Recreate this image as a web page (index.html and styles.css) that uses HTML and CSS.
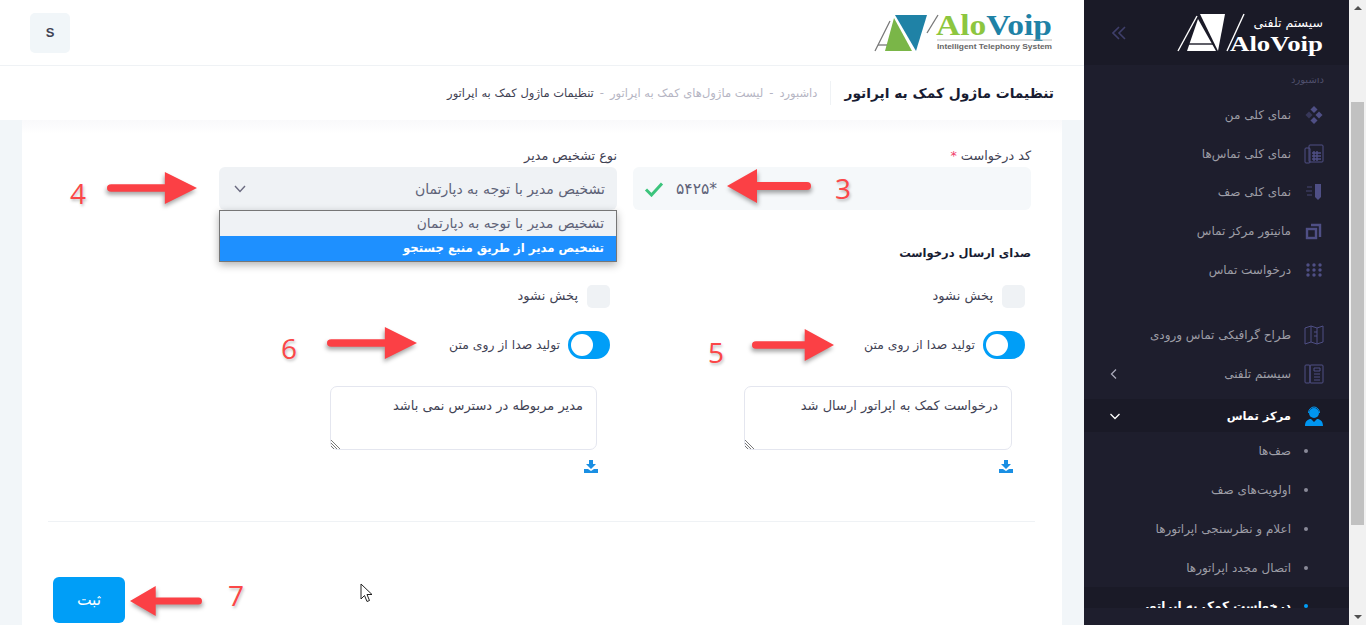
FILE: index.html
```html
<!DOCTYPE html>
<html lang="fa">
  <head>
    <meta charset="UTF-8" />
    <title>AloVoip</title>
    <link rel="stylesheet" href="styles.css">
  </head>
  <body>
    <main class="main" dir="rtl">
      <header class="topbar">
        <svg class="logo-light" width="180" height="40" viewBox="0 0 180 40">
          <polygon points="21,2 53,2 42,38" fill="#1f82a6"/>
          <polygon points="20,5 38,38 11,38" fill="#7ab648"/>
          <line x1="1" y1="38" x2="16" y2="8" stroke="#777" stroke-width="1.3"/>
          <line x1="4" y1="32" x2="13" y2="32" stroke="#777" stroke-width="1.3"/>
          <line x1="53" y1="20" x2="64" y2="2" stroke="#777" stroke-width="1.3"/>
          <text x="62" y="22" class="logo-word" textLength="116" lengthAdjust="spacingAndGlyphs"><tspan fill="#8dc63f">Alo</tspan><tspan fill="#1f82a6">Voip</tspan></text>
          <line x1="63" y1="27" x2="178" y2="27" stroke="#aaa" stroke-width="0.8"/>
          <text x="63" y="36" class="logo-tag" textLength="115" lengthAdjust="spacingAndGlyphs">Intelligent Telephony System</text>
        </svg>
        <div class="avatar">S</div>
      </header>

      <div class="subheader">
        <h1>تنظیمات ماژول کمک به اپراتور</h1>
        <ul class="crumbs">
          <li>داشبورد</li>
          <li>-</li>
          <li>لیست ماژول‌های کمک به اپراتور</li>
          <li>-</li>
          <li class="current">تنظیمات ماژول کمک به اپراتور</li>
        </ul>
      </div>

      <div class="content">
        <form class="card">
          <div class="row">
            <div class="field">
              <label>کد درخواست <span class="req">*</span></label>
              <div class="input valid">
                <span class="code">*۵۴۲۵</span>
                <svg width="20" height="16" viewBox="0 0 20 16"><path d="M2 8.5 L7.5 14 L18 2.5" fill="none" stroke="#3cc47c" stroke-width="3"/></svg>
              </div>
            </div>
            <div class="field">
              <label>نوع تشخیص مدیر</label>
              <div class="input select">
                <span>تشخیص مدیر با توجه به دپارتمان</span>
                <svg width="14" height="10" viewBox="0 0 14 10"><path d="M2 2 L7 7.5 L12 2" fill="none" stroke="#6b6b80" stroke-width="1.4"/></svg>
              </div>
              <ul class="options">
                <li>تشخیص مدیر با توجه به دپارتمان</li>
                <li class="on">تشخیص مدیر از طریق منبع جستجو</li>
              </ul>
            </div>
          </div>

          <h2 class="section-title">صدای ارسال درخواست</h2>

          <div class="row">
            <div class="sound">
              <label class="check"><span class="box"></span>پخش نشود</label>
              <label class="switch-row"><span class="switch"><i></i></span>تولید صدا از روی متن</label>
              <div class="tts">درخواست کمک به اپراتور ارسال شد
                <svg class="grip" width="10" height="10" viewBox="0 0 10 10"><path d="M0 1 L9 10 M0 4 L6 10 M0 7 L3 10" stroke="#555" stroke-width="0.8"/></svg>
              </div>
              <svg class="dl" width="14" height="13" viewBox="0 0 14 13"><path d="M5 0 H9 V4 H12 L7 9 L2 4 H5 Z M0 9 H4 L7 11 L10 9 H14 V13 H0 Z" fill="#1a8fe3"/></svg>
            </div>
            <div class="sound">
              <label class="check"><span class="box"></span>پخش نشود</label>
              <label class="switch-row"><span class="switch"><i></i></span>تولید صدا از روی متن</label>
              <div class="tts">مدیر مربوطه در دسترس نمی باشد
                <svg class="grip" width="10" height="10" viewBox="0 0 10 10"><path d="M0 1 L9 10 M0 4 L6 10 M0 7 L3 10" stroke="#555" stroke-width="0.8"/></svg>
              </div>
              <svg class="dl" width="14" height="13" viewBox="0 0 14 13"><path d="M5 0 H9 V4 H12 L7 9 L2 4 H5 Z M0 9 H4 L7 11 L10 9 H14 V13 H0 Z" fill="#1a8fe3"/></svg>
            </div>
          </div>

          <hr class="divider" />
          <div class="actions"><button type="button" class="save">ثبت</button></div>
        </form>
      </div>
    </main>

    <aside class="sidebar" dir="rtl">
      <div class="brand">
        <svg class="logo-dark" width="148" height="40" viewBox="0 0 148 40">
          <polygon points="24,1 49,1 42,38" fill="#fff"/>
          <polygon points="22,6 40,38 11,38" fill="#fff"/>
          <line x1="9" y1="31" x2="37" y2="31" stroke="#1a1a27" stroke-width="1.4"/>
          <line x1="2" y1="38" x2="21" y2="3" stroke="#fff" stroke-width="1.4"/>
          <line x1="51" y1="38" x2="68" y2="1" stroke="#fff" stroke-width="1.4"/>
          <text x="147" y="14" class="logo-fa" text-anchor="end">سیستم تلفنی</text>
          <text x="54" y="38" class="logo-word-dark" textLength="93" lengthAdjust="spacingAndGlyphs">AloVoip</text>
        </svg>
        <svg class="collapse" width="14" height="14" viewBox="0 0 14 14"><path d="M7 1 L1 7 L7 13 M13 1 L7 7 L13 13" fill="none" stroke="#3f3f6b" stroke-width="1.6"/></svg>
      </div>
      <nav class="menu">
        <div class="menu-cut">داشبورد</div>
        <a class="item"><svg width="20" height="20" viewBox="0 0 20 20" fill="#4f4f85"><rect x="7.5" y="2" width="5" height="5" transform="rotate(45 10 4.5)"/><rect x="2.5" y="7.5" width="5" height="5" opacity=".5" transform="rotate(45 5 10)"/><rect x="12.5" y="7.5" width="5" height="5" transform="rotate(45 15 10)"/><rect x="7.5" y="13" width="5" height="5" transform="rotate(45 10 15.5)"/></svg>نمای کلی من</a>
        <a class="item"><svg width="20" height="20" viewBox="0 0 20 20" fill="none" stroke="#4f4f85"><rect x="1" y="4" width="5" height="15" rx="1"/><rect x="5" y="1" width="14" height="17" rx="1"/><path d="M8 9h9M8 12h9M8 15h9M10 7v10M13 7v10" stroke-width="1.4"/></svg>نمای کلی تماس‌ها</a>
        <a class="item"><svg width="20" height="20" viewBox="0 0 20 20" fill="#4f4f85"><path d="M11 2h6v13l-3 3-3-3z"/><path d="M3 4h5v2H3zM2 8h6v2H2zM3 12h5v2H3z" opacity=".4"/></svg>نمای کلی صف</a>
        <a class="item"><svg width="20" height="20" viewBox="0 0 20 20" fill="none" stroke="#4f4f85" stroke-width="2.4"><path d="M7 4h9v12"/><rect x="3" y="8" width="9" height="9"/></svg>مانیتور مرکز تماس</a>
        <a class="item"><svg width="20" height="20" viewBox="0 0 20 20" fill="#4f4f85"><circle cx="4" cy="5" r="1.7"/><circle cx="10" cy="5" r="1.7"/><circle cx="16" cy="5" r="1.7"/><circle cx="4" cy="10" r="1.7"/><circle cx="10" cy="10" r="1.7"/><circle cx="16" cy="10" r="1.7"/><circle cx="4" cy="15" r="1.7"/><circle cx="10" cy="15" r="1.7"/><circle cx="16" cy="15" r="1.7"/></svg>درخواست تماس</a>
        <a class="item gap"><svg width="20" height="20" viewBox="0 0 20 20" fill="none" stroke="#4f4f85"><path d="M1 3l6-2 6 2 6-2v16l-6 2-6-2-6 2zM7 1v16M13 3v16"/><path d="M10 7h3M10 11h3"/></svg>طراح گرافیکی تماس ورودی</a>
        <a class="item"><svg width="20" height="20" viewBox="0 0 20 20" fill="none" stroke="#4f4f85"><rect x="1" y="1" width="5" height="18" rx="1"/><rect x="6" y="1" width="13" height="18" rx="1"/><path d="M10 4h6v3h-6zM10 10h6M10 13h6M10 16h6" /></svg>سیستم تلفنی<svg class="caret" width="10" height="12" viewBox="0 0 10 12"><path d="M7 1.5 L2.5 6 L7 10.5" fill="none" stroke="#a8a8b8" stroke-width="1.3"/></svg></a>
        <a class="item active"><svg width="20" height="20" viewBox="0 0 20 20" fill="#0095f0"><circle cx="10" cy="7" r="5"/><path d="M4.5 7a5.5 6 0 0 1 11 0" fill="none" stroke="#0095f0"/><path d="M1 20c0-5 3-7 6-7l3 3 3-3c3 0 6 2 6 7z"/></svg>مرکز تماس<svg class="caret" width="12" height="10" viewBox="0 0 12 10"><path d="M1.5 3 L6 7.5 L10.5 3" fill="none" stroke="#fff" stroke-width="1.3"/></svg></a>
        <a class="sub"><i></i>صف‌ها</a>
        <a class="sub"><i></i>اولویت‌های صف</a>
        <a class="sub"><i></i>اعلام و نظرسنجی اپراتورها</a>
        <a class="sub"><i></i>اتصال مجدد اپراتورها</a>
        <a class="sub current"><i></i>درخواست کمک به اپراتور</a>
      </nav>
    </aside>

    <div class="scrollbar">
      <span class="up"></span>
      <span class="thumb"></span>
      <span class="down"></span>
    </div>

    <!-- numbered notes drawn over the shot -->
    <div class="notes">
      <span class="num n3">3</span>
      <span class="num n4">4</span>
      <span class="num n5">5</span>
      <span class="num n6">6</span>
      <span class="num n7">7</span>
      <svg class="arrow a3" width="84" height="34" viewBox="0 0 84 34" preserveAspectRatio="none"><path d="M0 17 L30 0 V13 H80 a4 4 0 0 1 0 8 H30 V34 Z"/></svg>
      <svg class="arrow a4 flip" width="90" height="32" viewBox="0 0 84 34" preserveAspectRatio="none"><path d="M0 17 L30 0 V13 H80 a4 4 0 0 1 0 8 H30 V34 Z"/></svg>
      <svg class="arrow a5 flip" width="82" height="32" viewBox="0 0 84 34" preserveAspectRatio="none"><path d="M0 17 L30 0 V13 H80 a4 4 0 0 1 0 8 H30 V34 Z"/></svg>
      <svg class="arrow a6 flip" width="90" height="32" viewBox="0 0 84 34" preserveAspectRatio="none"><path d="M0 17 L30 0 V13 H80 a4 4 0 0 1 0 8 H30 V34 Z"/></svg>
      <svg class="arrow a7" width="72" height="30" viewBox="0 0 84 34" preserveAspectRatio="none"><path d="M0 17 L30 0 V13 H80 a4 4 0 0 1 0 8 H30 V34 Z"/></svg>
      <svg class="pointer" width="14" height="20" viewBox="0 0 14 20"><path d="M1 1 V16 L4.5 12.5 L7 18.5 L9.5 17.5 L7 11.5 H12 Z" fill="#fff" stroke="#222"/></svg>
    </div>
  </body>
</html>
```

FILE: styles.css
```css
* {
  box-sizing: border-box;
}

html,
body {
  height: 625px;
  overflow: hidden;
}

body {
  margin: 0;
  display: flex;
  font-family: "DejaVu Sans", sans-serif;
  font-size: 12px;
  color: #3f4254;
  background: #f2f6f9;
}

.main {
  width: 1084px;
  height: 625px;
  overflow: hidden;
}

.topbar {
  height: 66px;
  background: #fff;
  border-bottom: 1px solid #eff2f5;
  display: flex;
  align-items: center;
  justify-content: space-between;
  padding: 0 30px;
}

.logo-light,
.logo-dark {
  direction: ltr;
  overflow: visible;
}

.logo-word {
  font-family: "Liberation Serif", serif;
  font-weight: bold;
  font-size: 30px;
}

.logo-tag {
  font-family: "Liberation Sans", sans-serif;
  font-weight: bold;
  font-size: 8px;
  fill: #666;
}

.avatar {
  width: 40px;
  height: 40px;
  border-radius: 5px;
  background: #f1f6f9;
  color: #3f4254;
  font: bold 13px "Liberation Sans", sans-serif;
  display: flex;
  align-items: center;
  justify-content: center;
}

.subheader {
  height: 54px;
  background: #fff;
  display: flex;
  align-items: center;
  padding: 0 30px;
}

h1 {
  margin: 0;
  padding-left: 13px;
  border-left: 1px solid #eff2f5;
  font-size: 13.8px;
  font-weight: bold;
  line-height: 24px;
  color: #181c32;
}

.crumbs {
  list-style: none;
  margin: 0;
  padding: 0 13px 0 0;
  display: flex;
  gap: 6px;
  font-size: 11.5px;
  color: #b5b5c3;
}

.crumbs .current {
  color: #3f4254;
}

.content {
  padding: 0 22px;
}

.card {
  height: 520px;
  padding: 26px 31px 0 25px;
  background: linear-gradient(#f9f9fb, #fff 14px);
}

.row {
  display: flex;
  gap: 16px;
}

.field {
  position: relative;
  width: 398px;
}

label {
  display: block;
  font-size: 12.8px;
  line-height: 20px;
  color: #3f4254;
}

.req {
  color: #f1416c;
}

.input {
  height: 43px;
  margin-top: 1px;
  border-radius: 6px;
  background: #f5f8fa;
  display: flex;
  align-items: center;
  justify-content: space-between;
  padding: 0 12px 0 14px;
  color: #5e6278;
  font-size: 14px;
}

.select {
  background: #eff2f5;
}

.valid {
  justify-content: flex-end;
  gap: 12px;
  padding-left: 11px;
}

.code {
  font-size: 15.5px;
}

.options {
  position: absolute;
  top: 64px;
  left: 0;
  right: 0;
  margin: 0;
  padding: 0;
  list-style: none;
  border: 1px solid #767676;
  background: #eff2f5;
  box-shadow: 0 3px 8px rgba(0, 0, 0, 0.3);
  font-size: 13.8px;
  color: #5e6278;
}

.options li {
  height: 25px;
  line-height: 24px;
  padding: 0 12px;
}

.options .on {
  background: #1e90ff;
  color: #fff;
  font-size: 11.7px;
  font-weight: bold;
}

.section-title {
  margin: 33px 0 0;
  font-size: 11.5px;
  font-weight: bold;
  line-height: 20px;
  color: #181c32;
}

.sound {
  width: 398px;
  padding-top: 21px;
}

.sound + .sound {
  padding-right: 1px;
}

.sound + .sound .tts {
  width: 267px;
}

.check {
  display: flex;
  align-items: center;
  gap: 9px;
  height: 24px;
  padding-right: 6px;
  font-size: 13px;
}

.box {
  width: 23px;
  height: 23px;
  border-radius: 5px;
  background: #eff2f5;
}

.switch-row {
  display: flex;
  align-items: center;
  height: 30px;
  margin-top: 22px;
  padding-right: 6px;
  font-size: 12.4px;
}

.switch {
  width: 42px;
  height: 28px;
  margin-left: 8px;
  border-radius: 14px;
  background: #009ef7;
  display: flex;
  align-items: center;
  justify-content: flex-end;
  padding: 0 3px;
}

.switch i {
  width: 22px;
  height: 22px;
  border-radius: 50%;
  background: #fff;
}

.tts {
  position: relative;
  width: 268px;
  height: 64px;
  margin: 26px 19px 0 0;
  padding: 11px 13px;
  border: 1px solid #e4e6ef;
  border-radius: 7px;
  font-size: 13px;
  color: #3f4254;
  background: #fff;
}

.grip {
  position: absolute;
  left: 0;
  bottom: 0;
}

.dl {
  display: block;
  margin: 10px 18px 0 0;
}

.divider {
  border: 0;
  border-top: 1px solid #eff2f5;
  margin: 48px -4px 0 1px;
}

.actions {
  margin-top: 55px;
  display: flex;
  justify-content: flex-end;
  padding-left: 6px;
}

.save {
  width: 72px;
  height: 46px;
  border: 0;
  border-radius: 6px;
  background: #009ef7;
  color: #fff;
  font-family: inherit;
  font-size: 15.5px;
}

.sidebar {
  width: 265px;
  height: 625px;
  overflow: hidden;
  background: #1e1e2d;
}

.brand {
  height: 65px;
  background: #1a1a27;
  display: flex;
  align-items: center;
  justify-content: space-between;
  padding: 0 25px 0 28px;
}

.logo-fa {
  font-size: 12.5px;
  fill: #fff;
}

.logo-word-dark {
  font-family: "Liberation Serif", serif;
  font-weight: bold;
  font-size: 20px;
  fill: #fff;
}

.menu {
  height: 530px;
  margin-top: 13px;
  overflow: hidden;
}

.menu-cut {
  height: 12px;
  margin-top: -4px;
  margin-bottom: 9.6px;
  padding: 0 25px;
  font-size: 10px;
  line-height: 12px;
  color: #4f4f6c;
}

.item,
.sub {
  display: flex;
  align-items: center;
  height: 38.7px;
  padding: 0 25px;
  color: #9d9da6;
  font-size: 12px;
}

.item svg:first-child {
  margin-left: 13px;
  flex: none;
}

.item.gap {
  margin-top: 27px;
}

.caret {
  margin-right: auto;
}

.item.active {
  height: 33px;
  margin-top: 5.7px;
  background: #1a1a27;
  color: #fff;
  font-size: 11.5px;
  font-weight: bold;
}

.sub {
  padding-right: 41px;
}

.sub i {
  width: 4px;
  height: 4px;
  border-radius: 50%;
  background: #8a8a98;
  margin-left: 13px;
}

.sub.current {
  background: #1a1a27;
  color: #fff;
  font-weight: bold;
}

.sub.current i {
  background: #009ef7;
}

.scrollbar {
  width: 17px;
  height: 625px;
  background: #f1f1f1;
  position: relative;
}

.scrollbar span {
  position: absolute;
  left: 0;
}

.thumb {
  left: 2px !important;
  top: 102px;
  width: 13px;
  height: 423px;
  background: #c1c1c1;
}

.up,
.down {
  left: 5px !important;
  width: 0;
  height: 0;
  border-left: 4px solid transparent;
  border-right: 4px solid transparent;
}

.up {
  top: 6px;
  border-bottom: 4px solid #505050;
}

.down {
  bottom: 6px;
  border-top: 4px solid #505050;
}

.notes {
  position: absolute;
  inset: 0;
  pointer-events: none;
}

.num {
  position: absolute;
  font: 28px "Open Sans", sans-serif;
  line-height: 34px;
  color: #fb4748;
  text-shadow: 1px 2px 3px rgba(0, 0, 0, 0.25);
}

.n3 { left: 835px; top: 171px; }
.n4 { left: 70px; top: 176px; }
.n5 { left: 708px; top: 335px; }
.n6 { left: 281px; top: 331px; }
.n7 { left: 228px; top: 578px; }

.arrow {
  position: absolute;
  fill: #fb4045;
  filter: drop-shadow(1px 3px 2px rgba(0, 0, 0, 0.35));
}

.flip {
  transform: scaleX(-1);
}

.a3 { left: 727px; top: 169px; }
.a4 { left: 107px; top: 172px; }
.a5 { left: 752px; top: 329px; }
.a6 { left: 327px; top: 327px; }
.a7 { left: 130px; top: 586px; }

.pointer {
  position: absolute;
  left: 360px;
  top: 583px;
}
```
